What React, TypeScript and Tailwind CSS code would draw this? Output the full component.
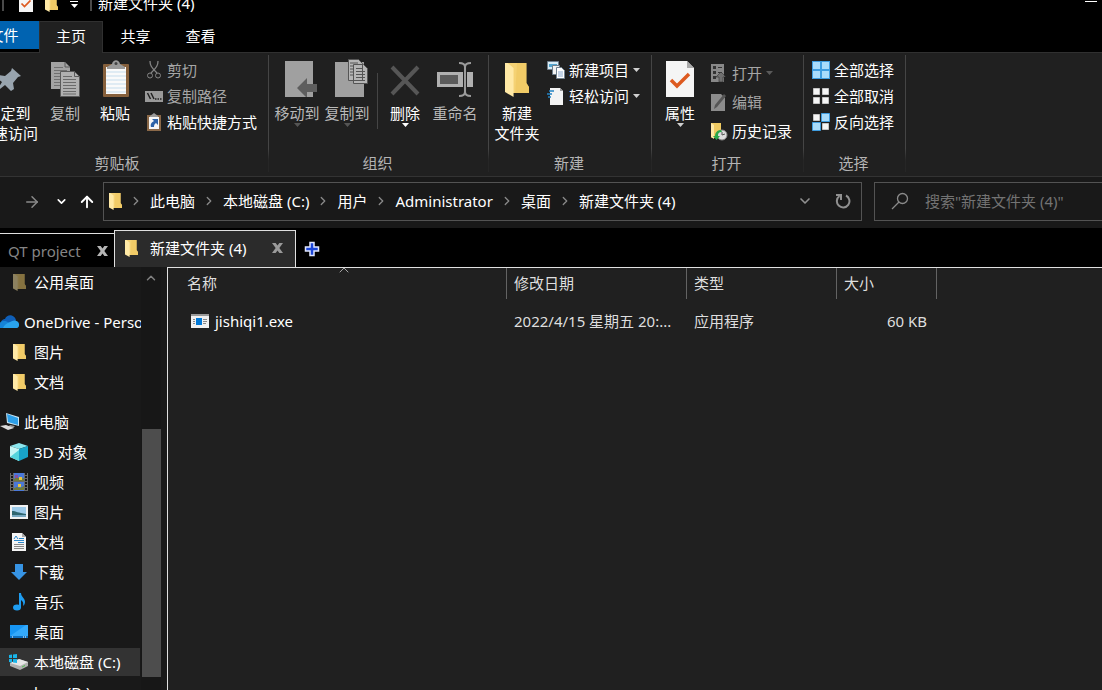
import type { ReactNode } from "react";
import { ArrowRight, ArrowUp, ChevronDown, ChevronRight, ChevronUp } from "lucide-react";

const FolderIcon = ({ className = "h-[18px] w-[13px]" }: { className?: string }) => (
  <svg viewBox="0 0 14 18" preserveAspectRatio="none" className={className} aria-hidden="true">
    <path d="M0 1h12.500v10l1.500 2v3H3z" fill="#f5d274" />
    <path d="M7 1h5.500v10l1.500 2v3H6z" fill="#eec75f" opacity=".6" />
    <path d="M0 1h1.500L5 3.500V18L0 15.500z" fill="#ffe9a6" />
  </svg>
);

const Caret = ({ className = "text-[#d0d0d0]" }: { className?: string }) => (
  <svg viewBox="0 0 7 4" className={`h-1 w-[7px] shrink-0 ${className}`} aria-hidden="true">
    <path d="M0 0h7L3.500 4z" fill="currentColor" />
  </svg>
);

/* Ribbon icons */
const PinIcon = () => (
  <svg viewBox="0 0 32 36" className="h-9 w-8">
    <path d="M20 7l9 8-3 1-5 6 1 6-3 2-6-6-9 7 6-10-5-4 2-3 6 1 6-5z" fill="#98a4ae" />
  </svg>
);

const CopyIcon = () => (
  <svg viewBox="0 0 30 36" className="h-9 w-[30px]">
    <path d="M1 1h14l5 5v22H1z" fill="#a3a3a3" />
    <path d="M15 1v5h5" fill="none" stroke="#5a5a5a" />
    <path d="M4 6.500h9M4 9.500h13M4 12.500h13M4 15.500h13M4 18.500h13M4 21.500h13M4 24.500h13" stroke="#707070" />
    <path d="M10.500 10.500h14l5 5v20h-19z" fill="#b0b0b0" stroke="#5a5a5a" />
    <path d="M24.500 10.500v5h5" fill="none" stroke="#5a5a5a" />
    <path d="M13 15.500h9M13 18.500h13M13 21.500h13M13 24.500h13M13 27.500h13M13 30.500h13M13 33h13" stroke="#6a6a6a" />
  </svg>
);

const PasteIcon = () => (
  <svg viewBox="0 0 28 37" className="h-[37px] w-7">
    <rect x="2" y="4" width="26" height="33" rx="1" fill="#86603c" />
    <path d="M5 7h20v27H5z" fill="#fafafa" />
    <path d="M5 12h20M5 16h20M5 20h20M5 24h20M5 28h20M5 32h20" stroke="#c5dcec" />
    <path d="M6 9V7l5-3c1-5 7-5 8 0l5 3v2z" fill="#9a9a9a" />
    <circle cx="15" cy="3.500" r="1.500" fill="#444" />
  </svg>
);

const MoveIcon = () => (
  <svg viewBox="-8 0 42 36" className="h-9 w-[42px]">
    <path d="M1 0h28v36H1z" fill="#a0a0a0" />
    <path d="M13 27l10-10v6h10v8H23v6z" fill="#5e5e5e" />
  </svg>
);

const CopyToIcon = () => (
  <svg viewBox="-8 0 42 38" className="h-[38px] w-[42px]">
    <path d="M1 3h29v35H1z" fill="#a0a0a0" />
    <path d="M14.500.500h10l4 4v17h-14zM19.500 5.500h10l4 4v15h-14z" fill="#b5b5b5" stroke="#555" />
    <path d="M16 4h8M16 7h3M16 10h3M16 13h3M16 16h3M22 9.500h6M22 12.500h9M22 15.500h9M22 18.500h9M22 21.500h9" stroke="#555" />
  </svg>
);

const DeleteIcon = () => (
  <svg viewBox="0 0 30 36" className="h-9 w-[30px]">
    <path d="M2 6l26 27M28 6L2 33" stroke="#565656" strokeWidth="4" />
  </svg>
);

const RenameIcon = () => (
  <svg viewBox="0 0 36 36" className="h-9 w-9">
    <path d="M0 11h36v15H0z" fill="#b0b0b0" />
    <path d="M3 14h18v9H3z" fill="#5b5b5b" />
    <path d="M28 6v26" stroke="#222" strokeWidth="4" />
    <path d="M22 2c4 0 6 1 6 4v25c0 3-2 4-6 4M34 2c-4 0-6 1-6 4v25c0 3 2 4 6 4" fill="none" stroke="#9a9a9a" strokeWidth="2" />
  </svg>
);

const PropertiesIcon = ({ className = "h-9 w-7" }: { className?: string }) => (
  <svg viewBox="0 0 28 36" preserveAspectRatio="none" className={className}>
    <path d="M0 0h21l7 7v29H0z" fill="#f5f5f5" />
    <path d="M21 0v7h7z" fill="#aaa" />
    <path d="M5 19l6 6 12-12" fill="none" stroke="#dd5a20" strokeWidth="3.500" />
  </svg>
);

const ScissorsIcon = () => (
  <svg viewBox="0 0 18 18" className="size-[18px]" fill="none" stroke="#858585">
    <path d="M5 0c0 4 1 6 7 12M13 0c0 4-1 6-7 12" strokeWidth="1.300" />
    <circle cx="5" cy="14.500" r="2.500" />
    <circle cx="13" cy="14.500" r="2.500" />
  </svg>
);

const PathIcon = () => (
  <svg viewBox="0 0 18 18" className="size-[18px]">
    <path d="M0 4h18v11H0z" fill="#999" />
    <path d="M2.500 6l3 6M6 6l3 6" stroke="#222" strokeWidth="1.500" />
    <path d="M10 12h1.500M12.500 12H14M15 12h1.500" stroke="#222" strokeWidth="1.500" />
  </svg>
);

const ShortcutIcon = () => (
  <svg viewBox="0 0 18 18" className="size-[18px]">
    <path d="M2 2h14v16H2z" fill="#8a6848" />
    <path d="M4 4h10v12H4z" fill="#f6f6f6" />
    <path d="M5 3l4-3 4 3v1H5z" fill="#999" />
    <path d="M7 6h6v6l-2-2c-2 1-2 3-2 4H6c-1-3 1-5 3-6z" fill="#2d62a8" />
  </svg>
);

const NewItemIcon = () => (
  <svg viewBox="0 0 18 18" className="size-[18px]" stroke="#6f7f8c">
    <path d="M.500.500h11v8H.500z" fill="#d9ecf6" />
    <path d="M2 3h8v3H2z" fill="#53a6d0" stroke="none" />
    <path d="M5.500 4.500h7v9h-7z" fill="#f2f2f2" />
    <path d="M9.500 6.500h5l3 3v8h-8z" fill="#fff" />
    <path d="M11 11h5M11 13h5M11 15h5" stroke="#8aaad0" />
  </svg>
);

const EasyAccessIcon = () => (
  <svg viewBox="0 0 18 18" className="size-[18px]">
    <path d="M3 1h10l3 3v14H3z" fill="#f3f3f3" />
    <path d="M13 1v3h3z" fill="#999" />
    <path d="M2 4h5M0 7h5M1 10h3" stroke="#2584c4" strokeWidth="1.500" />
  </svg>
);

const OpenIcon = () => (
  <svg viewBox="0 0 16 18" className="h-[18px] w-4">
    <path d="M1 0h13v18H1z" fill="#888" />
    <path d="M3 2h3v3H3zM3 7h3v3H3zM3 12h3v3H3zM8 3h4v1H8zM8 8h4v1H8z" fill="#333" />
    <path d="M11 8l5 5h-3v5H9v-5H6z" fill="#707070" stroke="#222" strokeWidth=".500" />
  </svg>
);

const EditIcon = () => (
  <svg viewBox="0 0 16 18" className="h-[18px] w-4">
    <path d="M1 1h10l4 4v13H1z" fill="#8c8c8c" />
    <path d="M4 16l1-4L14 1l2 2-9 11z" fill="#555" />
  </svg>
);

const HistoryIcon = () => (
  <svg viewBox="0 0 18 18" className="size-[18px] overflow-visible">
    <path d="M1 1h10v9l1 6H2L1 15z" fill="#f0cb62" />
    <path d="M1 1l3 2v14l-3-2z" fill="#ffe9a6" />
    <circle cx="12" cy="13" r="5" fill="#ddd" stroke="#888" />
    <path d="M12 10v3l3-1" fill="none" stroke="#555" />
    <path d="M11 8c-4 0-6 3-6 6H3l3.500 4 3.500-4H8c0-3 1-4 4-4z" fill="#2ba84a" />
  </svg>
);

const AllSelectedIcon = () => (
  <svg viewBox="0 0 18 18" className="size-[18px]">
    <path d="M0 0h18v18H0z" fill="#3f9de0" />
    <path d="M1 1h7v7H1zM10 1h7v7h-7zM1 10h7v7H1zM10 10h7v7h-7z" fill="#a9dcfb" />
  </svg>
);

const NoneSelectedIcon = () => (
  <svg viewBox="0 0 18 18" className="size-[18px]">
    <path d="M1.500 1.500h6v6h-6zM10.500 1.500h6v6h-6zM1.500 10.500h6v6h-6zM10.500 10.500h6v6h-6z" fill="#f5f5f5" stroke="#c4c4c4" />
  </svg>
);

const InvertIcon = () => (
  <svg viewBox="0 0 18 18" className="size-[18px]">
    <path d="M1.500 1.500h6v6h-6zM10.500 10.500h6v6h-6z" fill="#f5f5f5" stroke="#c4c4c4" />
    <path d="M9.500.500h8v8h-8zM.500 9.500h8v8h-8z" fill="#a9dcfb" stroke="#3f9de0" />
  </svg>
);

/* Navigation pane icons */
const CloudIcon = () => (
  <svg viewBox="0 0 20 14" className="h-3.5 w-5">
    <path d="M1 10C0 6 3 4 5 4c2-5 9-5 11 1l-4 6z" fill="#0f5fb8" />
    <path d="M0 13c-2-5 1-7 4-7 4 0 6 2 9 7z" fill="#1583d8" />
    <path d="M3 13c1-3 4-5 7-6 3-2 6-2 8 0 2 2 1 6-1 6z" fill="#2aa4ee" />
  </svg>
);

const PcIcon = () => (
  <svg viewBox="0 0 20 18" className="h-[18px] w-5">
    <path d="M6 0l13 4v9L7 10z" fill="#c9e4f2" />
    <path d="M7 1l11 4v7L8 9z" fill="#2d9fe8" />
    <path d="M10 12l5 1-2 2-5-1z" fill="#999" />
    <path d="M0 13l6-1 8 3-6 2z" fill="#dcdcdc" />
  </svg>
);

const CubeIcon = () => (
  <svg viewBox="0 0 18 18" className="size-[18px]">
    <path d="M9 0l9 3-9 3-9-3z" fill="#8be6ee" />
    <path d="M0 3l9 3v12l-9-4z" fill="#c6f5f5" />
    <path d="M0 14l9-7v11z" fill="#55d4dc" />
    <path d="M9 6l9-3v11l-9 4z" fill="#18a3c8" />
  </svg>
);

const VideoIcon = () => (
  <svg viewBox="0 0 18 18" className="size-[18px]">
    <path d="M0 0h18v18H0z" fill="#6a6a6a" />
    <path d="M2 0v18M16 0v18" stroke="#181818" strokeWidth="2" strokeDasharray="2 1" />
    <path d="M4 0h10v8H4zM4 9h10v9H4z" fill="#4a78d8" />
    <path d="M4 6l3-2 3 2 4-1v3H4zM4 15l3-1 3 1 4-2v4H4z" fill="#6f7a3c" />
    <path d="M5 2h3v3H5z" fill="#8b4f9c" />
    <path d="M9 4h3v3H9zM8 11h3v3H8z" fill="#e8c63c" />
  </svg>
);

const PictureIcon = () => (
  <svg viewBox="0 0 18 14" className="h-3.5 w-[18px]">
    <path d="M0 0h18v14H0z" fill="#f2f2f2" />
    <path d="M2 2h14v10H2z" fill="#9dcbea" />
    <path d="M2 6c4 0 6 2 14 3v2H2z" fill="#2f6670" />
    <path d="M2 10h14v2H2z" fill="#78a9c2" />
  </svg>
);

const DocumentIcon = () => (
  <svg viewBox="0 0 16 18" className="h-[18px] w-4">
    <path d="M1 0h10l4 4v14H1z" fill="#f5f5f5" />
    <path d="M11 0v4h4z" fill="#aaa" />
    <path d="M3 11.500h10M3 13.500h10M3 15.500h10" stroke="#888" />
    <path d="M3 6l2-3 2 3M8 5.500h5M3 7.500h10M7 9.500h6" stroke="#2d87c9" fill="none" />
  </svg>
);

const DownloadIcon = () => (
  <svg viewBox="0 0 16 16" className="size-4">
    <path d="M4 0h8v8h4l-8 8-8-8h4z" fill="#3794e4" />
  </svg>
);

const MusicIcon = () => (
  <svg viewBox="0 0 12 18" className="h-[18px] w-3">
    <ellipse cx="4" cy="14.500" rx="4" ry="3" fill="#1e9df1" />
    <path d="M6 0h2c0 4 4 5 4 9 0 2-1 3-2 4 1-4-1-5-2-6v8H6z" fill="#1e9df1" />
  </svg>
);

const DesktopIcon = () => (
  <svg viewBox="0 0 18 14" className="h-3.5 w-[18px]">
    <path d="M0 0h18v13H0z" fill="#1795f2" />
    <path d="M0 11L16 0h2v11z" fill="#34a9fa" />
    <path d="M0 11h18v2H0z" fill="#0d6fc0" />
    <path d="M2 12h1M13 12h1M15 12h1" stroke="#fff" />
  </svg>
);

const DriveIcon = () => (
  <svg viewBox="0 0 20 16" className="h-4 w-5">
    <path d="M1 9l9-4 9 3v4l-8 4-10-4z" fill="#b0b0b0" />
    <path d="M1 9l9-4 9 3-8 4z" fill="#e6e6e6" />
    <path d="M0 1l3-.500V4H0zM4 .500L8 0v4H4zM0 5h3v3.500L0 8zM4 5h4v4l-4-.500z" fill="#19b5ea" />
    <path d="M13 13l3-1.500" stroke="#4bc04b" />
  </svg>
);

const Separator = () => (
  <div className="mt-0.5 mb-1 w-px shrink-0 bg-linear-to-b from-[#454545] from-80% to-[#262626] to-90%" />
);

const RibbonGroup = ({ label, className, children }: { label: string; className: string; children: ReactNode }) => (
  <section aria-label={label} className={`flex shrink-0 flex-col ${className}`}>
    <div className="flex h-[100px]">{children}</div>
    <div className="pr-0.5 text-center leading-5 text-[#b4b4b4]">{label}</div>
  </section>
);

type BigButtonProps = {
  icon: ReactNode;
  lines: string[];
  className?: string;
  disabled?: boolean;
  caret?: string;
};

const BigButton = ({ icon, lines, className = "w-[50px]", disabled, caret }: BigButtonProps) => (
  <button type="button" disabled={disabled} className={`flex shrink-0 flex-col items-center pt-2 ${disabled ? "text-[#b9b9b9]" : "text-white"} ${className}`}>
    <span className="mb-1.5 flex h-9 items-end justify-center">{icon}</span>
    {lines.map((line) => (
      <span key={line} className="leading-5 whitespace-nowrap">{line}</span>
    ))}
    {caret && <Caret className={caret} />}
  </button>
);

type SmallButtonProps = {
  icon: ReactNode;
  label: string;
  disabled?: boolean;
  caret?: string;
  className?: string;
};

const SmallButton = ({ icon, label, disabled, caret, className = "h-[26px]" }: SmallButtonProps) => (
  <button type="button" disabled={disabled} className={`flex items-center whitespace-nowrap ${disabled ? "text-[#a6a6a6]" : "text-white"} ${className}`}>
    <span className="flex w-[22px] items-center">{icon}</span>
    {label}
    {caret && <span className="ml-1"><Caret className={caret} /></span>}
  </button>
);

const crumbs = ["此电脑", "本地磁盘 (C:)", "用户", "Administrator", "桌面", "新建文件夹 (4)"];

type TreeItem = { label: string; icon: ReactNode; root?: boolean; selected?: boolean };

const tree: TreeItem[][] = [
  [{ label: "公用桌面", icon: <FolderIcon className="h-[18px] w-[13px] opacity-50" /> }],
  [
    { label: "OneDrive - Personal", icon: <CloudIcon />, root: true },
    { label: "图片", icon: <FolderIcon /> },
    { label: "文档", icon: <FolderIcon /> },
  ],
  [
    { label: "此电脑", icon: <PcIcon />, root: true },
    { label: "3D 对象", icon: <CubeIcon /> },
    { label: "视频", icon: <VideoIcon /> },
    { label: "图片", icon: <PictureIcon /> },
    { label: "文档", icon: <DocumentIcon /> },
    { label: "下载", icon: <DownloadIcon /> },
    { label: "音乐", icon: <MusicIcon /> },
    { label: "桌面", icon: <DesktopIcon /> },
    { label: "本地磁盘 (C:)", icon: <DriveIcon />, selected: true },
    { label: "love (D:)", icon: null },
  ],
];

const TitleBar = () => (
  <header className="-mt-4 flex h-[37px] shrink-0 items-center bg-black">
    <span className="ml-0.5 h-4 w-0.5 bg-[#4a4a4a]" />
    <button type="button" aria-label="属性" className="ml-[15px]">
      <PropertiesIcon className="h-[18px] w-3.5" />
    </button>
    <button type="button" aria-label="新建文件夹" className="ml-3">
      <FolderIcon />
    </button>
    <button type="button" aria-label="自定义快速访问工具栏" className="ml-3 flex flex-col items-center gap-0.5 pt-1 text-white">
      <span className="h-px w-2 bg-white" />
      <Caret className="text-white" />
    </button>
    <span className="ml-3 h-4 w-0.5 bg-[#4a4a4a]" />
    <h1 className="ml-1.5 grow leading-5">新建文件夹 (4)</h1>
    <button type="button" aria-label="最小化" className="mr-[5px] mb-0.5 h-px w-3 bg-white" />
  </header>
);

const RibbonTabs = () => (
  <nav className="flex h-8 shrink-0 border-b border-[#303030] bg-black">
    <button type="button" className="-ml-8 h-7 w-[71px] bg-[#0063b1]">文件</button>
    <button type="button" className="-mb-px w-16 border-x border-t border-[#303030] bg-[#202020] pb-1">主页</button>
    <button type="button" className="w-[65px] pb-0.5">共享</button>
    <button type="button" className="w-[65px] pb-0.5">查看</button>
  </nav>
);

const Ribbon = () => (
  <div className="flex h-[124px] shrink-0 border-b border-[#333] bg-[#202020]">
    <RibbonGroup label="剪贴板" className="-ml-8 w-[300px]">
      <BigButton icon={<PinIcon />} lines={["固定到", "快速访问"]} className="ml-2 w-16" />
      <BigButton icon={<CopyIcon />} lines={["复制"]} disabled />
      <BigButton icon={<PasteIcon />} lines={["粘贴"]} />
      <div className="ml-[5px] flex flex-col pt-1">
        <SmallButton icon={<ScissorsIcon />} label="剪切" disabled />
        <SmallButton icon={<PathIcon />} label="复制路径" disabled />
        <SmallButton icon={<ShortcutIcon />} label="粘贴快捷方式" />
      </div>
    </RibbonGroup>
    <Separator />
    <RibbonGroup label="组织" className="w-[219px]">
      <BigButton icon={<MoveIcon />} lines={["移动到"]} className="ml-[3px] w-[50px]" disabled caret="text-[#555]" />
      <BigButton icon={<CopyToIcon />} lines={["复制到"]} disabled caret="text-[#555]" />
      <div className="mt-5 mr-0.5 ml-[5px] h-14 w-px bg-[#454545]" />
      <BigButton icon={<DeleteIcon />} lines={["删除"]} caret="text-white" />
      <BigButton icon={<RenameIcon />} lines={["重命名"]} disabled />
    </RibbonGroup>
    <Separator />
    <RibbonGroup label="新建" className="w-[162px]">
      <BigButton icon={<FolderIcon className="h-9 w-6" />} lines={["新建", "文件夹"]} className="ml-[3px] w-[50px]" />
      <div className="ml-[5px] flex flex-col pt-1">
        <SmallButton icon={<NewItemIcon />} label="新建项目" caret="text-[#d0d0d0]" />
        <SmallButton icon={<EasyAccessIcon />} label="轻松访问" caret="text-[#d0d0d0]" />
      </div>
    </RibbonGroup>
    <Separator />
    <RibbonGroup label="打开" className="w-[151px]">
      <BigButton icon={<PropertiesIcon />} lines={["属性"]} className="ml-[3px] w-[50px]" caret="text-[#d0d0d0]" />
      <div className="ml-[5px] flex flex-col pt-[5px]">
        <SmallButton icon={<OpenIcon />} label="打开" className="h-[29px]" disabled caret="text-[#5a5a5a]" />
        <SmallButton icon={<EditIcon />} label="编辑" className="h-[29px]" disabled />
        <SmallButton icon={<HistoryIcon />} label="历史记录" className="h-[29px]" />
      </div>
    </RibbonGroup>
    <Separator />
    <RibbonGroup label="选择" className="w-[101px]">
      <div className="ml-2 flex flex-col pt-1">
        <SmallButton icon={<AllSelectedIcon />} label="全部选择" />
        <SmallButton icon={<NoneSelectedIcon />} label="全部取消" />
        <SmallButton icon={<InvertIcon />} label="反向选择" />
      </div>
    </RibbonGroup>
    <Separator />
  </div>
);

const AddressBar = () => (
  <div className="flex h-[51px] shrink-0 bg-[#191919] pt-[5px]">
    <div className="flex h-[39px] w-[103px] shrink-0 items-center pl-[23px]">
      <button type="button" aria-label="前进" className="text-[#8a8a8a]"><ArrowRight size={18} strokeWidth={2} /></button>
      <button type="button" aria-label="最近浏览的位置" className="ml-3.5"><ChevronDown size={13} strokeWidth={3} /></button>
      <button type="button" aria-label="上移" className="ml-2.5"><ArrowUp size={18} strokeWidth={2.5} /></button>
    </div>
    <div className="flex h-[39px] min-w-0 grow items-center border border-[#535353] pb-0.5 pl-[5px]">
      <FolderIcon />
      <ol className="flex min-w-0 grow items-center overflow-hidden whitespace-nowrap">
        {crumbs.map((crumb) => (
          <li key={crumb} className="flex items-center">
            <ChevronRight size={14} strokeWidth={2.25} className="mx-[7px] text-[#8a8a8a]" />
            <a href="#">{crumb}</a>
          </li>
        ))}
      </ol>
      <button type="button" aria-label="以前的位置" className="mr-[22px] text-[#909090]"><ChevronDown size={16} strokeWidth={2.5} /></button>
      <button type="button" aria-label="刷新" className="mr-2.5 text-[#909090]">
        <svg viewBox="0 0 16 16" className="size-4" fill="none" stroke="currentColor" strokeWidth="2">
          <path d="M11 2.500a6.300 6.300 0 1 1-6.500.500" />
          <path d="M1 2h5v5" />
        </svg>
      </button>
    </div>
    <label className="-mr-3 ml-3 flex h-[39px] w-60 shrink-0 items-center border border-[#535353] pb-0.5 pl-4">
      <svg viewBox="0 0 18 18" className="size-[18px] shrink-0" fill="none" stroke="#8a8a8a" strokeWidth="1.300">
        <circle cx="11.500" cy="6.500" r="5" />
        <path d="M8 10l-7 7" />
      </svg>
      <input type="search" aria-label="搜索" placeholder={'搜索"新建文件夹 (4)"'} className="ml-4 w-full min-w-0 bg-transparent outline-none placeholder:text-[#737373]" />
    </label>
  </div>
);

const CloseIcon = ({ className }: { className: string }) => (
  <svg viewBox="0 0 12 12" preserveAspectRatio="none" className={`h-2.5 w-[11px] ${className}`}>
    <path d="M0 0h4l2 3 2-3h4L8 6l4 6H8L6 9l-2 3H0l4-6z" fill="currentColor" />
  </svg>
);

const FolderTabs = () => (
  <div className="flex h-[39px] shrink-0 items-end bg-black">
    <div className="flex h-[34px] w-[114px] items-center justify-between border-t border-[#e0e0e0] pr-1.5 pl-2">
      <button type="button" className="text-[#858585]">QT project</button>
      <button type="button" aria-label="关闭 QT project"><CloseIcon className="text-[#b5b5b5]" /></button>
    </div>
    <div className="flex h-[37px] w-[182px] items-center border-x border-t border-[#e0e0e0] bg-[#2b2b2b] pr-3 pb-0.5 pl-2.5">
      <FolderIcon />
      <button type="button" className="ml-3 grow text-left">新建文件夹 (4)</button>
      <button type="button" aria-label="关闭 新建文件夹 (4)"><CloseIcon className="text-[#9a9a9a]" /></button>
    </div>
    <button type="button" aria-label="新建标签页" className="mb-2.5 ml-2">
      <svg viewBox="0 0 16 16" className="size-4">
        <path d="M6 1.500h4V6h4.500v4H10v4.500H6V10H1.500V6H6z" fill="#1b45d8" stroke="#dfe6ff" strokeWidth="1.500" />
      </svg>
    </button>
  </div>
);

const Sidebar = () => (
  <aside className="flex w-[167px] shrink-0 bg-[#191919]">
    <div className="flex w-[141px] flex-col gap-2.5 overflow-hidden">
      {tree.map((group) => (
        <ul key={group[0].label}>
          {group.map((item) => (
            <li key={item.label} className="py-px">
              <a href="#" className={`flex h-7 items-center gap-1 whitespace-nowrap ${item.selected ? "mr-px bg-[#333]" : ""} ${item.root ? "" : "pl-2"}`}>
                <span className={`flex shrink-0 justify-center ${item.root ? "w-5" : "w-[22px]"}`}>{item.icon}</span>
                {item.label}
              </a>
            </li>
          ))}
        </ul>
      ))}
    </div>
    <div className="flex w-5 flex-col items-center bg-[#171717] pt-1">
      <ChevronUp size={14} strokeWidth={2.5} className="text-[#808080]" />
      <div className="mt-36 h-[248px] w-[19px] shrink-0 bg-[#4d4d4d]" />
    </div>
  </aside>
);

const FileList = () => (
  <main className="relative min-w-0 grow border-t border-l border-[#e0e0e0] bg-[#202020]">
    <ChevronUp size={16} strokeWidth={1.25} className="absolute -top-1.5 left-[168px] text-[#c0c0c0]" />
    <table className="ml-3 w-[757px] table-fixed border-separate border-spacing-0 text-left text-[#dedede]">
      <colgroup>
        <col className="w-[327px]" />
        <col className="w-[180px]" />
        <col className="w-[150px]" />
        <col className="w-[100px]" />
      </colgroup>
      <thead>
        <tr className="h-[31px]">
          {["名称", "修改日期", "类型", "大小"].map((name) => (
            <th key={name} scope="col" className="border-r border-[#636363] px-[7px] pt-0 pb-0.5 font-normal">{name}</th>
          ))}
        </tr>
      </thead>
      <tbody>
        <tr className="h-11">
          <td className="px-[7px]">
            <a href="#" className="flex items-center gap-1 pl-1 text-white">
              <svg viewBox="0 0 18 14" className="mr-0.5 h-3.5 w-[18px]">
                <path d="M0 0h18v14H0z" fill="#f0f0f0" />
                <path d="M0 0h18v2H0z" fill="#999" />
                <path d="M2 5.500h2M2 7.500h2M2 9.500h2M12 5.500h4M12 7.500h4M12 9.500h3" stroke="#888" />
                <path d="M5 4h6v7H5z" fill="#0078d7" />
              </svg>
              jishiqi1.exe
            </a>
          </td>
          <td className="px-[7px] whitespace-nowrap">2022/4/15 星期五 20:...</td>
          <td className="px-[7px]">应用程序</td>
          <td className="px-[10px] text-right">60 KB</td>
        </tr>
      </tbody>
    </table>
  </main>
);

const App = () => (
  <div className="flex h-screen flex-col overflow-hidden bg-black font-['Noto_Sans','Noto_Sans_CJK_SC',sans-serif] text-[15px] leading-5 text-white">
    <TitleBar />
    <RibbonTabs />
    <Ribbon />
    <AddressBar />
    <FolderTabs />
    <div className="flex min-h-0 grow">
      <Sidebar />
      <FileList />
    </div>
  </div>
);

export default App;
